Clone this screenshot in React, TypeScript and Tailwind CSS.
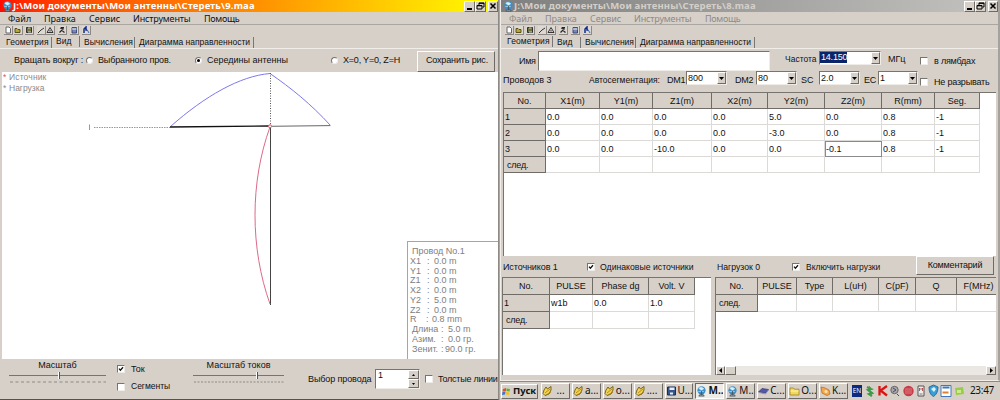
import type { ReactNode } from "react";
import clsx from "clsx";

type Kids = { children?: ReactNode; className?: string };

const raised = "border border-t-white border-l-white border-r-[#6e6a66] border-b-[#6e6a66] bg-[#d6d0c9]";
const sunken = "border border-t-[#77736f] border-l-[#77736f] border-r-[#efece8] border-b-[#efece8] bg-white";

function Label({ children, className }: Kids) {
  return <span className={clsx("shrink-0 whitespace-nowrap leading-[11px]", className)}>{children}</span>;
}

function Check({ on, className }: { on?: boolean; className?: string }) {
  return (
    <span className={clsx("size-[8px] shrink-0", sunken, className)}>
      {on && (
        <svg viewBox="0 0 6 6" className="block size-[6px]">
          <path d="M1 2.6 2.4 4.2 5 1.2" fill="none" stroke="#111" strokeWidth="1.3" />
        </svg>
      )}
    </span>
  );
}

function Radio({ on, className }: { on?: boolean; className?: string }) {
  return (
    <span className={clsx("flex size-[7px] shrink-0 items-center justify-center rounded-full", sunken, className)}>
      {on && <span className="size-[3px] rounded-full bg-black" />}
    </span>
  );
}

function Combo({ value, className, selected }: { value: string; className?: string; selected?: boolean }) {
  return (
    <span className={clsx("flex h-[14px] shrink-0 justify-between", sunken, className)}>
      <span className={clsx("mb-px pl-px leading-[12px]", selected && "bg-[#0a246a] tracking-[-0.2px] leading-[11px]! text-white")}>{value}</span>
      <span className={clsx("flex w-[9px] items-center justify-center", raised)}>
        <svg viewBox="0 0 5 3" className="h-[3px] w-[5px]">
          <path d="M0 0h5L2.500 3z" fill="#000" />
        </svg>
      </span>
    </span>
  );
}

function WindowButtons() {
  return (
    <div className="ml-auto flex">
      <span className={clsx("flex h-[11px] w-[11px] items-end px-[2px] pb-[1px]", raised)}>
        <span className="h-[1.500px] w-[5px] bg-black" />
      </span>
      <span className={clsx("flex h-[11px] w-[11px] items-center justify-center", raised)}>
        <svg viewBox="0 0 9 8" className="h-[8px] w-[9px]" fill="none" stroke="#000">
          <path d="M3 3V1h5v4H6.500M3 1.300h5M1 3.500h5V7H1zM1 3.800h5" />
        </svg>
      </span>
      <span className={clsx("ml-[2px] flex h-[11px] w-[10px] items-center justify-center", raised)}>
        <svg viewBox="0 0 8 8" className="size-[8px]">
          <path d="M1.500 1.500l5 5M6.500 1.500l-5 5" stroke="#000" strokeWidth="1.500" />
        </svg>
      </span>
    </div>
  );
}

function AppIcon({ className }: { className?: string }) {
  return (
    <svg viewBox="0 0 12 12" className={clsx("shrink-0", className)}>
      <circle cx="6" cy="4.800" r="4.500" fill="#3d8fc8" />
      <path d="M3 2.500c2-2 4-1 5.500.5L6 5zM2.500 6h6" fill="#d9f3ff" stroke="#bde6fa" strokeWidth=".7" />
      <path d="M6 5v5M3 11h6l-1.500-2h-3z" stroke="#45545f" fill="#9aa7b0" strokeWidth=".9" />
    </svg>
  );
}

function Tool({ children, className }: Kids) {
  return (
    <span className={clsx("flex h-[9px] w-[9px] shrink-0 items-center justify-center border-b border-r border-[#8d8883] bg-[#ddd8d2]", className)}>
      <svg viewBox="0 0 8 8" className="size-[8px]" fill="none" stroke="#222" strokeWidth=".9">
        {children}
      </svg>
    </span>
  );
}

function Toolbar() {
  return (
    <div className="flex h-[11px] items-center pl-[4px]">
      <Tool><path d="M2 1h3l1.500 1.500V7H2z" fill="#fff" stroke="#555" /></Tool>
      <Tool className="ml-px"><path d="M1 6.500V2.500h2l1 1h2v3z" fill="#b9a936" stroke="#4d4710" /></Tool>
      <Tool className="ml-[2px]"><path d="M1.500 1.500h5v5h-5z" fill="#73733c" /><path d="M3 2h2.500M3 6h3" stroke="#ddd" /></Tool>
      <Tool className="ml-[3px]"><path d="M1 7l3-3 3-2" /></Tool>
      <Tool><path d="M1 6.500h6L4 1.500zM4 4v1.500" /></Tool>
      <Tool className="ml-[3px]"><path d="M1.500 6.500L5 3M2 2l4 1M4.500 5l2 1.500M3 1.500h3" strokeWidth="1.200" /></Tool>
      <Tool className="ml-[3px]"><path d="M2 1.500h4.500v5.500H2z" fill="#7a86b5" stroke="#34406e" /><path d="M2 3h4.500" stroke="#fff" /></Tool>
      <Tool className="ml-[3px]"><path d="M2 7V3l2-2v3h1" stroke="#112a8a" strokeWidth="1.500" /><path d="M5 3.500L7 7" stroke="#245bb8" /></Tool>
    </div>
  );
}

function Frame({ file, active, tab, children }: { file: string; active?: boolean; tab: number; children: ReactNode }) {
  return (
    <section className="flex min-h-0 flex-1 flex-col">
      <header
        className={clsx(
          "flex h-[12px] items-center pl-[2px] font-['Noto_Sans'] text-[9.5px] font-bold",
          active ? "bg-linear-to-r from-[#ff0a00] via-[#ff8c00] to-[#ffff00] text-white" : "bg-linear-to-r from-[#7f7f7f] to-[#c4c3c0] text-[#d4d0c8]",
        )}
      >
        <AppIcon className="size-[11px]" />
        <Label className="pb-[2px] tracking-[0.170px]">J:\Мои документы\Мои антенны\Стереть\{file}</Label>
        <WindowButtons />
      </header>
      <nav
        className={clsx(
          "flex h-[13px] items-center border-b border-[#aaa6a1] pl-[8px] pt-px font-['Noto_Sans'] text-[9px]",
          active ? "text-[#111]" : "text-[#8e8a86]",
        )}
      >
        <Label className="w-[36px]">Файл</Label>
        <Label className="w-[45px]">Правка</Label>
        <Label className="w-[44px]">Сервис</Label>
        <Label className="w-[71px] tracking-[-0.150px]">Инструменты</Label>
        <Label className="tracking-[-0.300px]">Помощь</Label>
      </nav>
      <Toolbar />
      <div className="flex h-[12px] items-end pl-[6px] text-[8.5px]">
        <Label className={clsx("w-[46px] border-r border-[#777] tracking-[0.100px]", tab === 0 && "mb-[1px]")}>Геометрия</Label>
        <Label className={clsx("w-[28px] border-r border-[#777] pl-[4px]", tab === 1 && "mb-[1px]")}>Вид</Label>
        <Label className="w-[55px] border-r border-[#777] pl-[4px]">Вычисления</Label>
        <Label className="w-[119px] border-r border-[#777] pl-[4px]">Диаграмма направленности</Label>
      </div>
      {children}
    </section>
  );
}

const wire: [string, string, string][] = [
  ["X1", ":", "0.0 m"], ["Y1", ":", "0.0 m"], ["Z1", ":", "0.0 m"],
  ["X2", ":", "0.0 m"], ["Y2", ":", "5.0 m"], ["Z2", ":", "0.0 m"],
];
const angles = [["Длина", "5.0 m"], ["Азим.", "0.0 гр."], ["Зенит.", "90.0 гр."]];

function WireInfo() {
  return (
    <div className="absolute bottom-0 right-0 h-[118px] w-[91px] border border-r-0 border-b-0 border-[#a5a5a5] bg-white pl-[2px] pt-[5px] text-[9px] text-[#808080] [&_div]:h-[9.750px] [&_div]:leading-[9.750px]">
      <div className="whitespace-nowrap pl-[2px]">Провод No.1</div>
      {wire.map(([name, colon, value]) => (
        <div key={name} className="flex">
          <span className="w-[17px]">{name}</span>
          <span className="w-[7px]">{colon}</span>
          <span>{value}</span>
        </div>
      ))}
      <div className="flex">
        <span className="w-[16px]">R</span>
        <span className="w-[6px]">:</span>
        <span>0.8 mm</span>
      </div>
      {angles.map(([name, value]) => (
        <div key={name} className={clsx("flex whitespace-nowrap pl-[2px]")}>
          <span className="w-[29px]">{name}</span>
          <span className={value.startsWith("90") ? "w-[4px]" : "w-[7px]"}>:</span>
          <span>{value}</span>
        </div>
      ))}
    </div>
  );
}

function AntennaView() {
  return (
    <div className="relative ml-[2px] h-[287px] bg-white">
      <svg viewBox="2 72 496 287" className="block h-[287px] w-[496px]" fill="none">
        <path d="M170.500 126.500C205 96 240 76 270 73.500C291 88 311 104 330.500 125.500" stroke="#7d78ee" />
        <path d="M270.500 73V126" stroke="#555" strokeDasharray="1 1.500" />
        <path d="M94 127.500H170" stroke="#8c8cea" strokeDasharray="1.500 1" />
        <path d="M89.500 124.500V130" stroke="#999" />
        <path d="M170 127L270 126" stroke="#111" strokeWidth="1.400" />
        <path d="M270 126.300L330 125.600" stroke="#666" />
        <path d="M270.500 126V305" stroke="#444" />
        <path d="M270 127C250 182 250 248 270 304" stroke="#dc6a88" />
        <circle cx="270" cy="126.300" r="1.500" stroke="#f0506a" fill="#fff" />
      </svg>
      <div className="absolute left-[1px] top-0 text-[8.5px] text-[#8a8a8a]">
        <div className="flex h-[11px] items-center"><span className="w-[6px] text-[#f04a5a]">*</span><Label className="tracking-[0.150px]">Источник</Label></div>
        <div className="flex h-[11px] items-center"><span className="w-[6px]">*</span><Label>Нагрузка</Label></div>
      </div>
      <WireInfo />
    </div>
  );
}

function Slider({ title, className, thumb, dash }: { title: string; className: string; thumb: string; dash: string }) {
  return (
    <div className={clsx("flex h-[30px] shrink-0 flex-col items-center pt-px", className)}>
      <Label>{title}</Label>
      <div className="mt-px flex h-[7px] w-full items-center">
        <span className={clsx("h-px bg-[#77736f]", thumb)} />
        <span className="h-[7px] w-[2px] border-r border-[#55514e] bg-white" />
        <span className="h-px flex-1 bg-[#77736f]" />
      </div>
      <svg className="mt-[2px] h-[2px] w-full"><path d="M1 1H400" stroke="#8d8985" strokeDasharray={dash} /></svg>
    </div>
  );
}

function LeftWindow() {
  return (
    <div className="flex h-[400px] w-[499px] flex-col border-b border-r border-b-[#55514e] border-r-[#8d8985]">
      <Frame file="9.maa" active tab={1}>
        <div className="flex h-[24px] items-center border-t border-[#f1eeea] pl-[14px] text-[9px]">
          <Label className="w-[73px] tracking-[-0.100px]">Вращать вокруг :</Label>
          <Radio className="-ml-px" />
          <Label className="ml-[5px] w-[97px] tracking-[-0.150px]">Выбранного пров.</Label>
          <Radio on />
          <Label className="ml-[5px] w-[124px]">Середины антенны</Label>
          <Radio />
          <Label className="ml-[5px] w-[74px] tracking-[-0.2px]">X=0, Y=0, Z=H</Label>
          <span className={clsx("mt-[1px] flex h-[21px] w-[78px] items-center justify-center whitespace-nowrap pl-[2px] tracking-[-0.150px]", raised)}>Сохранить рис.</span>
        </div>
        <AntennaView />
        <div className="flex h-[36px] items-start text-[9px]">
          <Slider title="Масштаб" className="ml-[9px] w-[97px]" thumb="w-[49px]" dash="3 2.500" />
          <div className="ml-[11px] flex w-[76px] flex-col pt-[5px]">
            <span className="flex h-[10px] items-center gap-[6px]"><Check on /><Label>Ток</Label></span>
            <span className="mt-[7px] flex h-[11px] items-center gap-[6px]"><Check /><Label className="text-[8.5px]">Сегменты</Label></span>
          </div>
          <Slider title="Масштаб токов" className="w-[91px]" thumb="w-[63px]" dash="2 1.500" />
          <Label className="ml-[24px] mt-[15px] w-[67px] tracking-[-0.100px]">Выбор провода</Label>
          <span className={clsx("mt-[10px] flex h-[20px] w-[45px] shrink-0 justify-between pl-[2px] leading-[11px]", sunken)}>
            1
            <span className="flex w-[11px] flex-col">
              <span className={clsx("flex flex-1 items-center justify-center", raised)}><svg viewBox="0 0 3 2" className="h-[2px] w-[3px]"><path d="M0 2h3L1.500 0z" /></svg></span>
              <span className={clsx("flex flex-1 items-center justify-center", raised)}><svg viewBox="0 0 3 2" className="h-[2px] w-[3px]"><path d="M0 0h3L1.500 2z" /></svg></span>
            </span>
          </span>
          <Check className="ml-[5px] mt-[16px]" />
          <Label className="ml-[5px] mt-[15px] tracking-[-0.250px]">Толстые линии</Label>
        </div>
      </Frame>
    </div>
  );
}

const th = "shrink-0 border-b border-r border-[#6f6b67] bg-[#d6d0c9] text-center";
const td = "shrink-0 border-b border-r border-[#dcdad6] pl-[1px] whitespace-nowrap";

function Grid({ widths, head, rows, headH, rowH, focus }: { widths: string[]; head: string[]; rows: string[][]; headH: string; rowH: string; focus?: string }) {
  return (
    <div className="flex flex-col">
      <div className={clsx("flex", headH)}>
        {head.map((h, i) => <span key={h} className={clsx(th, widths[i])}>{h}</span>)}
      </div>
      {rows.map((row, r) => (
        <div key={r} className={clsx("flex", rowH)}>
          {row.map((cell, c) => (
            <span
              key={c}
              className={clsx(
                widths[c],
                c === 0 ? clsx(th, "text-left!", cell === "след." ? "pl-[3px] tracking-[-0.200px]" : "pl-[1px]") : td,
                focus === `${r}-${c}` && "outline -outline-offset-1 outline-[#8a8a8a]",
              )}
            >
              {cell}
            </span>
          ))}
        </div>
      ))}
    </div>
  );
}

const wireRows = [
  ["1", "0.0", "0.0", "0.0", "0.0", "5.0", "0.0", "0.8", "-1"],
  ["2", "0.0", "0.0", "0.0", "0.0", "-3.0", "0.0", "0.8", "-1"],
  ["3", "0.0", "0.0", "-10.0", "0.0", "0.0", "-0.1", "0.8", "-1"],
  ["след.", "", "", "", "", "", "", "", ""],
];

function ScrollBar() {
  return (
    <div className="mt-auto flex h-[9px] bg-[#ebe8e3]">
      <span className={clsx("flex w-[9px] items-center justify-center", raised)}><svg viewBox="0 0 3 5" className="h-[5px] w-[3px]"><path d="M3 0v5L0 2.500z" /></svg></span>
      <span className={clsx("w-[11px]", raised)} />
      <span className={clsx("ml-auto flex w-[10px] items-center justify-center", raised)}><svg viewBox="0 0 3 5" className="h-[5px] w-[3px]"><path d="M0 0v5l3-2.500z" /></svg></span>
    </div>
  );
}

function RightWindow() {
  return (
    <div className="flex h-[381px] flex-col border-l border-r-2 border-b border-b-[#f1eeea] border-l-[#f1eeea] border-r-[#a5a19d]">
      <Frame file="8.maa" tab={0}>
        <div className="flex h-[23px] items-start border-t border-[#f1eeea] text-[9px]">
          <Label className="ml-[18px] mt-[7px] w-[19px] tracking-[-0.300px]">Имя</Label>
          <span className={clsx("mt-[2px] h-[20px] w-[232px] shrink-0", sunken)} />
          <Label className="ml-[15px] mt-[5px] w-[34px] text-[8.5px]">Частота</Label>
          <Combo className="mt-[2px] w-[62px]" value="14.150" selected />
          <Label className="ml-[7px] mt-[5px] w-[32px]">МГц</Label>
          <Check className="mt-[8px]" />
          <Label className="ml-[6px] mt-[7px] tracking-[-0.200px]">в лямбдах</Label>
        </div>
        <div className="flex h-[21px] items-start text-[9px]">
          <Label className="ml-[2px] mt-[4px] w-[86px]">Проводов 3</Label>
          <Label className="mt-[4px] w-[78px] text-[8.5px]">Автосегментация:</Label>
          <Label className="mt-[4px] w-[19px] tracking-[-0.3px]">DM1</Label>
          <Combo className="w-[41px]" value="800" />
          <Label className="ml-[8px] mt-[4px] w-[21px] tracking-[-0.3px]">DM2</Label>
          <Combo className="w-[41px]" value="80" />
          <Label className="ml-[4px] mt-[4px] w-[18px]">SC</Label>
          <Combo className="w-[41px]" value="2.0" />
          <Label className="ml-[4px] mt-[4px] w-[14px] tracking-[-0.3px]">EC</Label>
          <Combo className="w-[40px]" value="1" />
          <Check className="ml-[2px] mt-[7px]" />
          <Label className="ml-[6px] mt-[6px] tracking-[-0.200px]">Не разрывать</Label>
        </div>
        <div className="mx-[2px] h-[164px] border-l border-t border-[#77736f] bg-white text-[9px] leading-[16px]">
          <Grid
            headH="h-[16px]"
            rowH="h-[16px]"
            focus="2-6"
            widths={["w-[42px]", "w-[54px]", "w-[53px]", "w-[59px]", "w-[56px]", "w-[57px]", "w-[57px]", "w-[53px]", "w-[45px]"]}
            head={["No.", "X1(m)", "Y1(m)", "Z1(m)", "X2(m)", "Y2(m)", "Z2(m)", "R(mm)", "Seg."]}
            rows={wireRows}
          />
        </div>
        <div className="flex h-[21px] items-start text-[9px]">
          <Label className="ml-[2px] mt-[6px] w-[84px] tracking-[-0.100px]">Источников 1</Label>
          <Check on className="mt-[7px]" />
          <Label className="ml-[5px] mt-[6px] w-[117px] text-[8.7px]">Одинаковые источники</Label>
          <Label className="mt-[6px] w-[75px] text-[8.7px]">Нагрузок 0</Label>
          <Check on className="mt-[7px]" />
          <Label className="ml-[6px] mt-[6px] w-[110px] text-[8.5px]">Включить нагрузки</Label>
          <span className={clsx("flex h-[19px] w-[78px] items-center justify-center tracking-[-0.200px]", raised)}>Комментарий</span>
        </div>
        <div className="flex h-[98px] pl-[1px] text-[9px] leading-[17px]">
          <div className="h-full w-[209px] shrink-0 border-l border-t border-[#77736f] bg-white">
            <Grid
              headH="h-[17px]"
              rowH="h-[17px]"
              widths={["w-[47px]", "w-[43px]", "w-[56px]", "w-[46px]"]}
              head={["No.", "PULSE", "Phase dg", "Volt. V"]}
              rows={[["1", "w1b", "0.0", "1.0"], ["след.", "", "", ""]]}
            />
          </div>
          <div className="ml-[4px] flex h-full w-[281px] shrink-0 flex-col overflow-hidden border-l border-t border-[#77736f] bg-white">
            <Grid
              headH="h-[17px]"
              rowH="h-[17px]"
              widths={["w-[42px]", "w-[39px]", "w-[36px]", "w-[46px]", "w-[37px]", "w-[41px]", "w-[44px]"]}
              head={["No.", "PULSE", "Type", "L(uH)", "C(pF)", "Q", "F(MHz)"]}
              rows={[["след.", "", "", "", "", "", ""]]}
            />
            <ScrollBar />
          </div>
        </div>
      </Frame>
    </div>
  );
}

function Cat() {
  return (
    <svg viewBox="0 0 11 12" className="h-[12px] w-[11px] shrink-0">
      <path d="M2 5l2-3 1.500 2L9 1.500 9 5 7 9 3 10.500 1 8.500z" fill="#f4d44c" stroke="#6b5a16" strokeWidth=".9" />
      <path d="M3 8l5-4M4 10l5-3" stroke="#a5781c" strokeWidth=".8" />
    </svg>
  );
}
function Save() {
  return (
    <svg viewBox="0 0 11 12" className="h-[12px] w-[11px] shrink-0">
      <path d="M1.500 2h8v8h-8z" fill="#35578e" stroke="#1c2d50" />
      <path d="M3.500 2.500h5v2.500h-5zM4 7.500h3v2H4z" fill="#e8eef7" />
    </svg>
  );
}
function Book() {
  return (
    <svg viewBox="0 0 11 12" className="h-[12px] w-[11px] shrink-0">
      <path d="M.5 7L4 3.500l6.500 1L7.500 8z" fill="#5458a8" stroke="#33376d" strokeWidth=".7" />
      <path d="M1 7.500L7.500 9l3-4" fill="none" stroke="#8d90c8" />
    </svg>
  );
}
function Folder() {
  return (
    <svg viewBox="0 0 11 12" className="h-[12px] w-[11px] shrink-0">
      <path d="M1 3h3.500l1 1.200H10V10H1z" fill="#f3d860" stroke="#9b8326" strokeWidth=".8" />
      <path d="M1.500 6h8" stroke="#fff3ae" />
    </svg>
  );
}
function Swirl() {
  return (
    <svg viewBox="0 0 11 12" className="h-[12px] w-[11px] shrink-0">
      <path d="M1 2l4 1 4 2 1 4-3 1.500L2 8z" fill="#f2a94e" stroke="#c26d20" strokeWidth=".8" />
      <circle cx="6" cy="6.500" r="1.500" fill="#fbe1b4" />
    </svg>
  );
}

const tasks: { icon: ReactNode; text: string; pressed?: boolean }[] = [
  { icon: <Cat />, text: " ..." },
  { icon: <Cat />, text: "a..." },
  { icon: <Cat />, text: "o..." },
  { icon: <Cat />, text: "...." },
  { icon: <Save />, text: "U..." },
  { icon: <AppIcon className="size-[11px]" />, text: "M..", pressed: true },
  { icon: <AppIcon className="size-[11px]" />, text: "M..." },
  { icon: <Book />, text: "C..." },
  { icon: <Folder />, text: "O..." },
  { icon: <Swirl />, text: "K..." },
];

function Tray() {
  return (
    <svg viewBox="864 382 104 18" className="h-[18px] w-[104px] shrink-0">
      <path d="M867 387l4 2-3 1 4 3-3 1 3 2" stroke="#3c9b45" strokeWidth="2.200" fill="none" />
      <path d="M869 386l4 4" stroke="#888" />
      <path d="M879.500 386v9.500M887 386l-6.500 4.500 6.500 5" stroke="#dc1414" strokeWidth="2.300" fill="none" />
      <circle cx="894.500" cy="390" r="3.700" fill="#aaa6a8" stroke="#66646c" />
      <path d="M893 388l3 2-3 2M897 394l2 2" stroke="#444c70" fill="none" />
      <circle cx="908.500" cy="391" r="5.200" fill="#c73c48" />
      <path d="M905 389h7M905 391h7M905 393h7" stroke="#e99aa0" strokeWidth=".7" />
      <path d="M918 386h6v10h-6z" fill="#eee" stroke="#555" />
      <path d="M919.500 391v-3l1.500 1.500 1.500-1.500v3" stroke="#a33" fill="none" strokeWidth=".8" />
      <path d="M919.500 394h3" stroke="#777" />
      <path d="M929 387l4.500-2 4.500 2c0 5-2 8-4.500 9.500C930.500 395 929 392 929 387z" fill="#3b9ed4" stroke="#2273a8" />
      <path d="M931 389l3-2 2 2-2 3z" fill="#d8f2ff" />
      <path d="M941 385.500h10v11h-10z" fill="#fff" stroke="#4276b8" />
      <path d="M942.500 387.500h7" stroke="#3e79bf" strokeWidth="2" />
      <path d="M942.500 392.500h6" stroke="#e08030" strokeWidth="2" />
      <path d="M955 388l8-1 1 7-8 1z" fill="#9bcb4c" />
      <path d="M957 390l4 0v3h-4z" fill="#cdea8d" />
    </svg>
  );
}

function Taskbar() {
  return (
    <footer className="flex h-[19px] items-center border-t border-[#8d8985] bg-[#d6d0c9] pl-[1px] font-['Noto_Sans'] text-[10px]">
      <span className={clsx("mr-[3px] flex h-[15px] w-[37px] shrink-0 items-center text-[9.5px] font-bold", raised)}>
        <svg viewBox="0 0 9 9" className="mr-[2px] size-[9px] shrink-0">
          <path d="M1 2l3-1v3L.5 4.500z" fill="#e2502e" />
          <path d="M4.500 1.500l3.500.5-.5 2.500-3-.5z" fill="#5fae3b" />
          <path d="M.5 5l3-.5L3 7.500l-3 .5z" fill="#3f74c7" />
          <path d="M4 5l3.500.3L7 8l-3-.5z" fill="#efc02f" />
        </svg>
        <Label className="pb-px">Пуск</Label>
      </span>
      {tasks.map((t, i) => (
        <span
          key={i}
          className={clsx(
            "mr-[2px] flex h-[16px] w-[28.900px] shrink-0 items-center overflow-hidden whitespace-pre",
            t.pressed ? "border border-t-[#6e6a66] border-l-[#6e6a66] border-r-white border-b-white bg-[#efece8] font-bold" : raised,
          )}
        >
          {t.icon}
          <Label className="whitespace-pre! pb-px pl-[1px]">{t.text}</Label>
        </span>
      ))}
      <span className="ml-[2px] mr-[2px] flex h-[12px] w-[10px] shrink-0 items-center justify-center bg-[#0c2a80] text-[6.5px] text-white">EN</span>
      <Tray />
      <Label className="ml-[2px] pb-px tracking-[-0.300px]">23:47</Label>
    </footer>
  );
}

export default function App() {
  return (
    <main className="flex h-[400px] w-[1000px] overflow-hidden bg-[#d6d0c9] font-['Liberation_Sans',sans-serif] text-[9px] text-[#111]">
      <LeftWindow />
      <div className="flex w-[501px] flex-col border-l border-[#aaa6a1]">
        <RightWindow />
        <Taskbar />
      </div>
    </main>
  );
}
